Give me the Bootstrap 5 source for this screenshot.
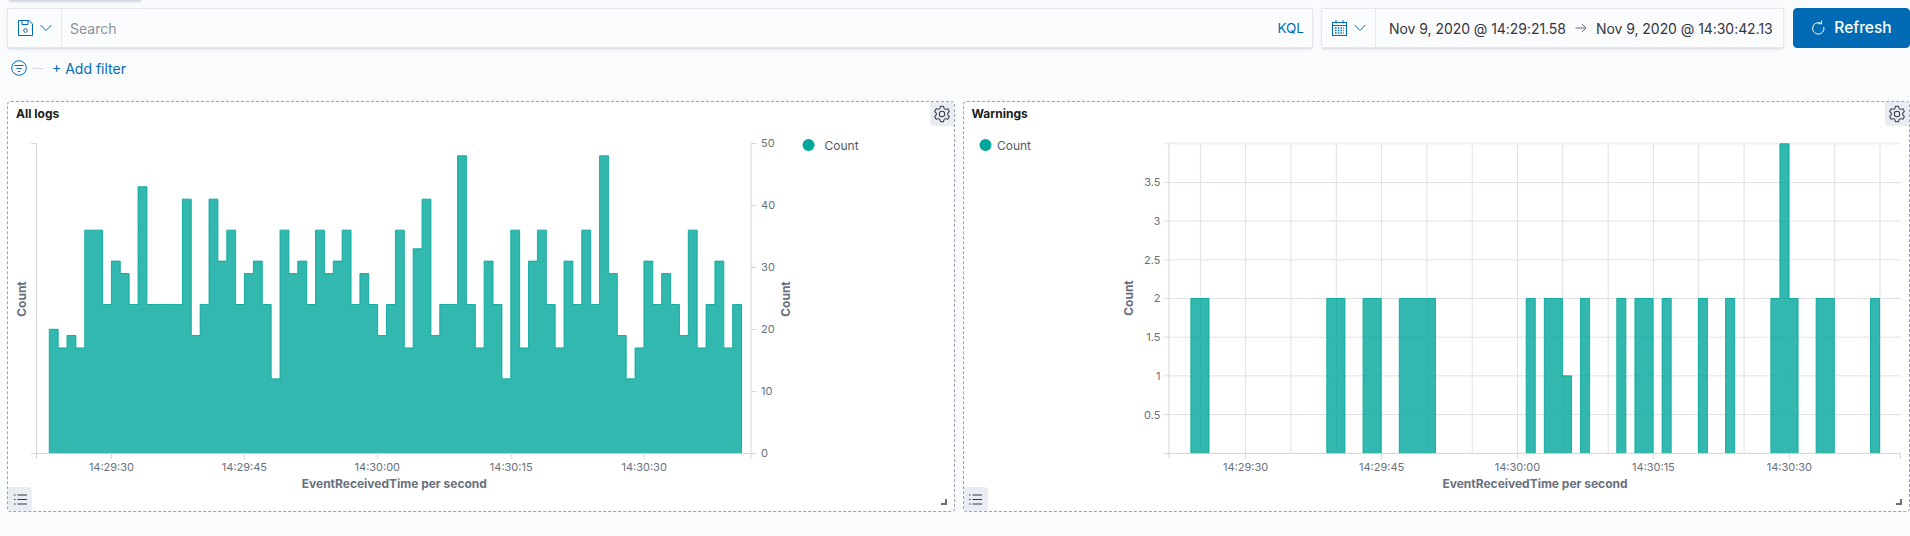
<!DOCTYPE html>
<html lang="en">
<head>
    <meta charset="UTF-8">
    <meta name="viewport" content="width=device-width, initial-scale=1.0">
    <title>Dashboard</title>
    <link href="https://cdn.jsdelivr.net/npm/bootstrap@5.3.0/dist/css/bootstrap.min.css" rel="stylesheet">
    <style>
        html, body { height: 100%; }
        body { background: #fafbfd; font-family: Inter, "Liberation Sans", sans-serif; color: #343741; overflow: hidden; }
        .top-tab { width: 132px; height: 1px; margin-left: 9px; background: #d3dae6; box-shadow: 0 1px 2px rgba(152,162,179,.6); }
        .top-bar { height: 40px; margin-top: 7px; padding-left: 7px; }
        .query-box { border: 1px solid #e4e7f0; background: #fbfcfd; box-shadow: 0 2px 2px -1px rgba(152,162,179,.3), 0 1px 5px -2px rgba(152,162,179,.3); }
        .search-box { width: 1306px; }
        .date-box { width: 463px; }
        .prefix-btn { border-right: 1px solid #e4e7f0; flex: 0 0 54px; gap: 7px; }
        .query-input { border: 0; border-radius: 0; background: transparent; font-size: 14px; padding: 0 8px; box-shadow: none; }
        .query-input::placeholder { color: #8b909c; }
        .kql-link { color: #006bb4; font-size: 13.500px; padding-right: 8px; }
        .date-text { font-size: 14px; padding-left: 13px; gap: 9px; white-space: nowrap; letter-spacing: -.05px; }
        .refresh-btn { width: 117px; height: 40px; background: #006bb4; border-color: #006bb4; font-size: 15.500px; font-weight: 500; border-radius: 4px; gap: 9px; margin-left: 1px; }
        .filter-row { height: 24px; margin-top: 8px; margin-bottom: 21px; padding-left: 11px; color: #006bb4; font-size: 14px; }
        .filter-dash { width: 10px; height: 1px; background: #d3dae6; margin: 0 9px 0 6px; }
        .panels { padding-left: 7px; gap: 8px; height: 411px; }
        .dash-panel { flex: 1 1 0; position: relative; background: #fff; border: 1px dashed #98a2b3; border-radius: 4px; overflow: hidden; }
        .dash-panel svg.chart { display: block; width: 100%; height: 100%; }
        .chart text { font-family: Inter, "Liberation Sans", sans-serif; font-size: 11px; fill: #69707d; }
        .chart text.axis-title { font-size: 12px; font-weight: 700; fill: #69707d; }
        .chart text.legend-label { font-size: 12px; fill: #535966; }
        .panel-title { position: absolute; left: 8px; top: 3px; font-size: 12px; line-height: 18px; font-weight: 700; color: #1a1c21; }
        .gear-btn { position: absolute; top: 0; right: 0; width: 24px; height: 24px; background: #e9edf3; border-bottom-left-radius: 4px; }
        .list-btn { position: absolute; left: 0; bottom: 0; width: 24px; height: 24px; background: #e9edf3; border-top-right-radius: 4px; }
        .resize-mark { position: absolute; right: 7px; bottom: 6px; width: 6px; height: 6px; border-right: 2px solid #69707d; border-bottom: 2px solid #69707d; }
    </style>
</head>
<body>
    <div class="top-tab"></div>

    <div class="top-bar d-flex gap-2">
        <div class="query-box search-box d-flex align-items-center">
            <div class="prefix-btn h-100 d-flex align-items-center justify-content-center">
                <svg width="15" height="16" viewBox="0 0 15 16" fill="none" stroke="#006bb4"><path d="M.5.5h10.500l3.500 3.500v11.500H.5z"/><path d="M4 .5v4h6v-4"/><circle cx="7.500" cy="10.500" r="1.800"/></svg>
                <svg width="12" height="8" viewBox="0 0 12 8" fill="none" stroke="#006bb4"><path d="M.5 1l5.500 5.500L11.500 1"/></svg>
            </div>
            <input class="form-control query-input flex-grow-1" type="text" placeholder="Search">
            <span class="kql-link">KQL</span>
        </div>
        <div class="query-box date-box d-flex align-items-center">
            <div class="prefix-btn h-100 d-flex align-items-center justify-content-center">
                <svg width="15" height="16" viewBox="0 0 15 16" fill="none" stroke="#006bb4"><rect x=".5" y="2.500" width="14" height="13"/><path d="M.5 5.500h14M4 0v3.500M11 0v3.500"/><path d="M3 8h9M3 10.500h9M3 13h9" stroke-dasharray="1.500 1.250" stroke-width="1.400"/></svg>
                <svg width="12" height="8" viewBox="0 0 12 8" fill="none" stroke="#006bb4"><path d="M.5 1l5.500 5.500L11.500 1"/></svg>
            </div>
            <div class="date-text d-flex align-items-center">
                <span>Nov 9, 2020 @ 14:29:21.58</span>
                <svg width="12" height="10" viewBox="0 0 12 10" fill="none" stroke="#69707d"><path d="M.5 5h10.500M7 1l4 4-4 4"/></svg>
                <span>Nov 9, 2020 @ 14:30:42.13</span>
            </div>
        </div>
        <button class="btn btn-primary refresh-btn d-flex align-items-center justify-content-center p-0" type="button">
            <svg width="14" height="16" viewBox="0 0 14 16" fill="none" stroke="#fff"><path d="M10.500 3.700A5.700 5.700 0 1 0 12.800 7"/><path d="M10.500 .5v3.200H7.500"/></svg>
            <span>Refresh</span>
        </button>
    </div>

    <div class="filter-row d-flex align-items-center">
        <svg width="16" height="16" viewBox="0 0 16 16" fill="none" stroke="#006bb4"><circle cx="8" cy="8" r="7.300"/><path d="M3.500 5.500h9M5.500 8.500h5M7 11.500h2"/></svg>
        <span class="filter-dash"></span>
        <span>+ Add filter</span>
    </div>

    <div class="panels d-flex">
        <div class="dash-panel">
            <svg class="chart" id="allLogsChart" viewBox="8 102 946 409"></svg>
            <div class="panel-title">All logs</div>
            <div class="gear-btn d-flex align-items-center justify-content-center"></div>
            <div class="list-btn d-flex align-items-center justify-content-center"></div>
            <div class="resize-mark"></div>
        </div>
        <div class="dash-panel">
            <svg class="chart" id="warningsChart" viewBox="963.500 102 946 409"></svg>
            <div class="panel-title">Warnings</div>
            <div class="gear-btn d-flex align-items-center justify-content-center"></div>
            <div class="list-btn d-flex align-items-center justify-content-center"></div>
            <div class="resize-mark"></div>
        </div>
    </div>

    <script src="https://cdn.jsdelivr.net/npm/bootstrap@5.3.0/dist/js/bootstrap.bundle.min.js"></script>
    <script>
        const gearIcon = `<svg width="18" height="18" viewBox="0 0 16 16" fill="none" stroke="#343741" stroke-width=".9" stroke-linejoin="round"><path d="M6.600 1.200H9.400L9.900 3.200L11.200 3.900L13.200 3.300L14.600 5.700L13.100 7.200V8.800L14.600 10.300L13.200 12.700L11.200 12.100L9.900 12.800L9.400 14.800H6.600L6.100 12.800L4.800 12.100L2.800 12.700L1.400 10.300L2.900 8.800V7.200L1.400 5.700L2.800 3.300L4.800 3.900L6.100 3.200Z"/><circle cx="8" cy="8" r="2.400"/></svg>`;
        const listIcon = `<svg width="13" height="11" viewBox="0 0 13 11" fill="none" stroke="#343741"><path d="M0 1h2M0 5.500h2M0 10h2" stroke-dasharray="1.500 .5"/><path d="M3.500 1H13M3.500 5.500H13M3.500 10H13"/></svg>`;
        document.querySelectorAll('.gear-btn').forEach(el => el.innerHTML = gearIcon);
        document.querySelectorAll('.list-btn').forEach(el => el.innerHTML = listIcon);

        const teal = '#00a69b';
        const axisColor = '#d3d5d9';
        const gridColor = '#dfe1e6';

        const line = (x1, y1, x2, y2, color, width = 1) =>
            `<line x1="${x1}" y1="${y1}" x2="${x2}" y2="${y2}" stroke="${color}" stroke-width="${width}"/>`;
        const label = (x, y, text, anchor = 'middle', cls = '') =>
            `<text x="${x}" y="${y}" text-anchor="${anchor}" dominant-baseline="central" class="${cls}">${text}</text>`;
        const vTitle = (x, y, text) =>
            `<text x="${x}" y="${y}" text-anchor="middle" dominant-baseline="central" class="axis-title" transform="rotate(-90 ${x} ${y})">${text}</text>`;

        // step outline round a run of bars, closed on the baseline
        function stepPath(x0, w, values, base, yOf) {
            let d = `M${x0} ${base}`;
            values.forEach((v, i) => {
                d += `V${yOf(v).toFixed(1)}H${(x0 + (i + 1) * w).toFixed(2)}`;
            });
            return d + `V${base}Z`;
        }

        // All logs, one value per second from 14:29:23
        const logCounts = [20,17,19,17,36,36,24,31,29,24,43,24,24,24,24,41,19,24,41,31,36,24,29,31,24,12,36,29,31,24,36,29,31,36,24,29,24,19,24,36,
            17,33,41,19,24,24,48,24,17,31,24,12,36,17,31,36,24,17,31,24,36,24,48,29,19,12,17,31,24,29,24,19,36,17,24,31,17,24];
        const logsBase = 453.3;
        const logsY = v => logsBase - v * 6.2;
        let a = '';
        a += `<path d="${stepPath(49.3, 8.88, logCounts, logsBase, logsY)}" fill="${teal}" fill-opacity=".8" stroke="${teal}" stroke-opacity=".85"/>`;
        a += line(36.5, 143, 36.5, 459, axisColor);
        a += line(31, 143.5, 36.5, 143.5, axisColor);
        a += line(31, 453.5, 751, 453.5, axisColor);
        a += line(751.5, 143, 751.5, 459, axisColor);
        [['14:29:30', 111.5], ['14:29:45', 244.5], ['14:30:00', 377.5], ['14:30:15', 511.5], ['14:30:30', 644.5]].forEach(([t, x]) => {
            a += line(x, 453, x, 459, axisColor);
            a += label(x, 467, t);
        });
        [0, 10, 20, 30, 40, 50].forEach(v => {
            const y = Math.round(logsY(v)) + .5;
            a += line(751.5, y, 757, y, axisColor);
            a += label(761.5, y - .5, v, 'start');
        });
        a += vTitle(21.5, 299, 'Count');
        a += vTitle(785.5, 299, 'Count');
        a += label(394.5, 484, 'EventReceivedTime per second', 'middle', 'axis-title');
        a += `<circle cx="809" cy="145" r="6" fill="${teal}"/>`;
        a += label(825, 145, 'Count', 'start', 'legend-label');
        document.getElementById('allLogsChart').innerHTML = a;

        // Warnings, [start second, values...] with seconds counted from 14:29:00
        const warningRuns = [[24,[2,2]],[39,[2,2]],[43,[2,2]],[47,[2,2,2,2]],[61,[2]],[63,[2,2,1]],[67,[2]],[71,[2]],[73,[2,2]],[76,[2]],[80,[2]],[83,[2]],[88,[2,4,2]],[93,[2,2]],[99,[2]]];
        const warnBase = 453.3;
        const warnY = v => warnBase - v * 77.4;
        const secX = s => 1245.3 + (s - 30) * 9.067;
        let b = '';
        for (let s = 25; s <= 100; s += 5) {
            b += line(secX(s).toFixed(1), 143, secX(s).toFixed(1), 453, gridColor);
        }
        [0.5, 1, 1.5, 2, 2.5, 3, 3.5].forEach(v => {
            const y = warnY(v).toFixed(1);
            b += line(1163, y, 1901, y, gridColor);
            b += label(1160, y, v, 'end');
        });
        b += line(1163, 143.5, 1901, 143.5, '#eef0f3', 2);
        warningRuns.forEach(([start, values]) => {
            b += `<path d="${stepPath(secX(start) - .4, 9.067, values, warnBase, warnY)}" fill="${teal}" fill-opacity=".8" stroke="${teal}" stroke-opacity=".85"/>`;
        });
        b += line(1168.5, 143, 1168.5, 459, axisColor);
        b += line(1163, 453.5, 1900.5, 453.5, axisColor);
        b += line(1900.5, 453, 1900.5, 459, axisColor);
        [['14:29:30', 30], ['14:29:45', 45], ['14:30:00', 60], ['14:30:15', 75], ['14:30:30', 90]].forEach(([t, s]) => {
            b += line(secX(s).toFixed(1), 453, secX(s).toFixed(1), 459, axisColor);
            b += label(secX(s).toFixed(1), 467, t);
        });
        b += vTitle(1128, 298, 'Count');
        b += label(1534.8, 484, 'EventReceivedTime per second', 'middle', 'axis-title');
        b += `<circle cx="985" cy="145" r="6" fill="${teal}"/>`;
        b += label(996.5, 145, 'Count', 'start', 'legend-label');
        document.getElementById('warningsChart').innerHTML = b;
    </script>
</body>
</html>
